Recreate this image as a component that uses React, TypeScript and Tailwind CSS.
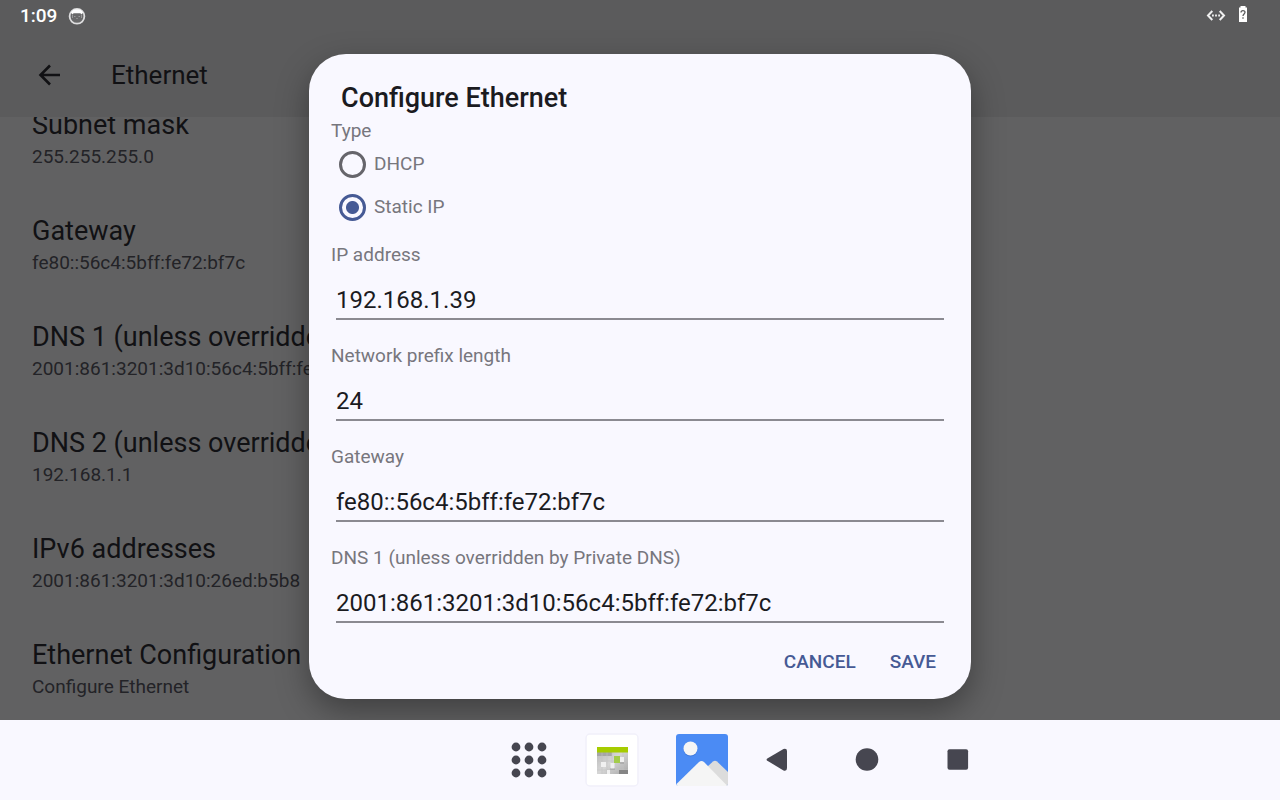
import React, { useState } from 'react';

const details = [
  { title: 'Subnet mask', value: '255.255.255.0' },
  { title: 'Gateway', value: 'fe80::56c4:5bff:fe72:bf7c' },
  { title: 'DNS 1 (unless overridden by Private DNS)', value: '2001:861:3201:3d10:56c4:5bff:fe72:bf7c' },
  { title: 'DNS 2 (unless overridden by Private DNS)', value: '192.168.1.1' },
  { title: 'IPv6 addresses', value: '2001:861:3201:3d10:26ed:b5b8' },
  { title: 'Ethernet Configuration', value: 'Configure Ethernet' },
];

const fields = [
  { id: 'ip', label: 'IP address', value: '192.168.1.39' },
  { id: 'prefix', label: 'Network prefix length', value: '24' },
  { id: 'gateway', label: 'Gateway', value: 'fe80::56c4:5bff:fe72:bf7c' },
  { id: 'dns1', label: 'DNS 1 (unless overridden by Private DNS)', value: '2001:861:3201:3d10:56c4:5bff:fe72:bf7c' },
];

function StatusBar() {
  return (
    <div className="flex h-8 shrink-0 items-center bg-[#5b5b5c] pl-5 pr-8 text-white">
      <span className="text-[19px] leading-8 font-medium">1:09</span>
      <svg className="ml-[11px]" width="18" height="18" viewBox="0 0 18 18">
        <circle cx="9" cy="9.300" r="7.400" fill="#69696a" stroke="#dededf" strokeWidth="1.800" />
        <path d="M3 5.500C4.500 1 13.500 1 15 5.500L13.800 7.200 12.200 6.200H5.800L4.200 7.200Z" fill="#fff" />
        <path d="M4.500 7.500V11M13.500 7.500V11M6 9.500h1.500M10.500 9.500H12M8.300 11.500h1.400" stroke="#99999a" strokeWidth="1" />
      </svg>
      <div className="ml-auto flex items-center gap-3">
        <svg width="20" height="14" viewBox="0 0 20 14" fill="none" stroke="#f0f0f0">
          <path d="M6.300 2 2 6.500 6.300 11M13.700 2 18 6.500 13.700 11" strokeWidth="2" />
          <path d="M6 6.500h1.800M9.100 6.500h1.800M12.200 6.500H14" strokeWidth="1.800" />
        </svg>
        <svg width="10" height="20" viewBox="0 0 10 20">
          <path d="M1 1.500H2.500V0H7.500V1.500H9V16H1Z" fill="#fff" />
          <path d="M3 6.500C3 4 7 4 7 6.300 7 8 5 8 5 10M5 11.300V12.800" fill="none" stroke="#5b5b5c" strokeWidth="1.300" />
        </svg>
      </div>
    </div>
  );
}

function Field({ id, label, value }: { id: string; label: string; value: string }) {
  const [text, setText] = useState(value);
  return (
    <div className="flex flex-col gap-[15px]">
      <label htmlFor={id} className="text-[19px] leading-6 text-[#77767d]">{label}</label>
      <input
        id={id}
        type="text"
        value={text}
        onChange={(e) => setText(e.target.value)}
        className="mx-[5px] h-[38px] border-b-2 border-[#8b8a91] bg-transparent text-2xl text-[#1b1b1f] outline-none"
      />
    </div>
  );
}

function ConfigureDialog() {
  const [type, setType] = useState('static');
  return (
    <form
      role="dialog"
      aria-labelledby="dialog-title"
      onSubmit={(e) => e.preventDefault()}
      className="w-full max-w-[662px] rounded-[37px] bg-[#f9f8ff] px-[22px] pt-[26px] pb-4 shadow-[0_12px_32px_rgba(0,0,0,0.35)]"
    >
      <h2 id="dialog-title" className="px-[10px] text-[27px] leading-9 font-medium text-[#1b1b1f]">Configure Ethernet</h2>
      <fieldset className="mb-[14px]">
        <legend className="pt-[3px] text-[19px] leading-6 text-[#77767d]">Type</legend>
        {[['dhcp', 'DHCP'], ['static', 'Static IP']].map(([key, label]) => (
          <label key={key} className="flex h-[43px] items-center gap-2 pl-2 text-[19px] text-[#77767d]">
            <input
              type="radio"
              name="type"
              checked={type === key}
              onChange={() => setType(key)}
              className="size-[27px] appearance-none rounded-full border-[3px] border-[#66656b] checked:border-[#465a95] checked:bg-[radial-gradient(circle,#465a95_6px,transparent_7px)]"
            />
            {label}
          </label>
        ))}
      </fieldset>
      <div className="flex flex-col gap-6">
        {fields.map((f) => <Field key={f.id} {...f} />)}
      </div>
      <div className="mt-5 flex justify-end text-[19px] font-medium text-[#465a95]">
        <button type="button" className="h-10 px-[13px]">CANCEL</button>
        <button type="submit" className="ml-2 h-10 px-[13px]">SAVE</button>
      </div>
    </form>
  );
}

function NavBar() {
  return (
    <nav className="flex h-20 shrink-0 items-center justify-center bg-[#f9f8ff] pl-[199px]">
      <button aria-label="All apps" className="mr-9">
        <svg width="40" height="40" viewBox="0 0 40 40" fill="#464650">
          {[7, 20, 33].map((y) => [7, 20, 33].map((x) => <circle key={`${x}-${y}`} cx={x} cy={y} r="4.400" />))}
        </svg>
      </button>
      <button aria-label="Calendar" className="mr-9">
        <svg width="54" height="54" viewBox="0 0 54 54">
          <defs>
            <linearGradient id="cal" x1="0" y1="0" x2="1" y2="1">
              <stop offset="0" stopColor="#b5b5b5" />
              <stop offset="0.500" stopColor="#d6d6d6" />
              <stop offset="1" stopColor="#a8a8a8" />
            </linearGradient>
          </defs>
          <rect x="1" y="1" width="52" height="52" rx="4" fill="#fff" stroke="#f1f0fa" strokeWidth="1.500" />
          <rect x="12" y="14" width="31" height="27" fill="url(#cal)" />
          <path d="M12 19h15v4H12z" fill="#a6a6a6" />
          <path d="M17 19v22M22 19v22M27 19v22M38 19v22M12 28h31M12 37h31" stroke="#c2c2c2" strokeWidth="0.600" />
          <rect x="12" y="14" width="31" height="5.500" fill="#a6cc00" />
          <path d="M16 29h5v5h-5zM25.500 30h4v6h-4zM35 24h4v5h-4zM22 37h3v4h-3z" fill="#f0f0f0" />
          <path d="M25 36h5M35 30h4" stroke="#888" strokeWidth="0.700" />
          <path d="M29 23h6v7h-6z" fill="#a3cc4a" />
          <path d="M34 37h9v4h-9z" fill="#858585" />
        </svg>
      </button>
      <button aria-label="Gallery" className="mr-9">
        <svg width="54" height="54" viewBox="0 0 54 54">
          <rect x="1" y="1" width="52" height="52" rx="3" fill="#4b8bf4" />
          <circle cx="15.500" cy="16.500" r="7" fill="#3d78dc" />
          <circle cx="15.500" cy="15.500" r="7" fill="#f5f5f5" />
          <path d="M32 34 38 28.500Q40 27 42 28.500L53 39V51Q53 53 51 53H45Z" fill="#dcdcdc" />
          <path d="M1.500 51 24 29Q26.500 27 29 29L52 52.500 51 53H3Q1.500 53 1.500 51Z" fill="#f5f5f5" />
        </svg>
      </button>
      <button aria-label="Back" className="mr-[66px]">
        <svg width="24" height="24" viewBox="0 0 24 24" fill="#464650">
          <path d="M2.300 10.600 18.500.9Q22 0 22 3V20Q22 23.500 18.500 22.400L2.300 12.700Q.8 11.700 2.300 10.600Z" />
        </svg>
      </button>
      <button aria-label="Home" className="mr-[67px]">
        <svg width="24" height="24" viewBox="0 0 24 24" fill="#464650"><circle cx="12" cy="11.500" r="11.300" /></svg>
      </button>
      <button aria-label="Recents">
        <svg width="24" height="24" viewBox="0 0 24 24" fill="#464650"><rect x="1.500" y="1.200" width="20.600" height="20.600" rx="2" /></svg>
      </button>
    </nav>
  );
}

export default function App() {
  return (
    <div className="flex h-screen flex-col font-['Roboto',sans-serif]">
      <div className="relative flex min-h-0 flex-1 flex-col overflow-hidden bg-[#616162]">
        <StatusBar />
        <header className="flex h-[85px] shrink-0 items-center bg-[#5b5b5c] pl-8 text-[#111114]">
          <button aria-label="Navigate up" className="mr-[46px]">
            <svg width="33" height="33" viewBox="0 0 33 33" fill="none" stroke="currentColor" strokeWidth="2.600">
              <path d="M28 17H9M18 7.500 8.500 17 18 26.500" />
            </svg>
          </button>
          <h1 className="text-[26px] leading-8">Ethernet</h1>
        </header>
        <ul className="flex min-h-0 flex-1 flex-col justify-end overflow-hidden">
          {details.map((d) => (
            <li key={d.title} className="flex h-[106px] shrink-0 flex-col justify-center gap-1 px-8 pt-1">
              <p className="text-[27px] leading-8 text-[#111114]">{d.title}</p>
              <p className="text-[19px] leading-6 text-[#232327]">{d.value}</p>
            </li>
          ))}
        </ul>
        <div className="absolute inset-0 flex items-center justify-center pt-8">
          <ConfigureDialog />
        </div>
      </div>
      <NavBar />
    </div>
  );
}
